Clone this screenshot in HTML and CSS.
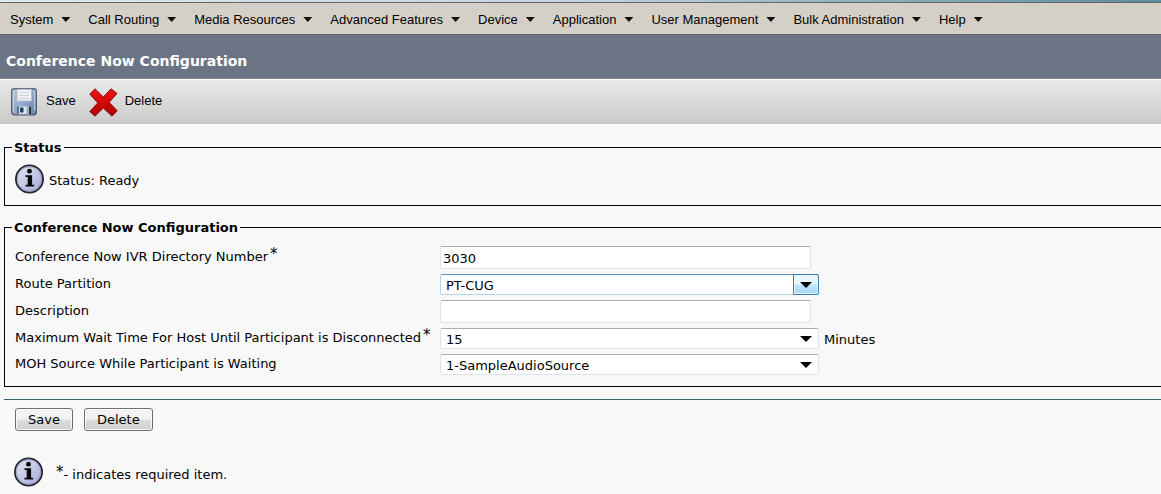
FILE: index.html
```html
<!DOCTYPE html>
<html lang="en">
<head>
<meta charset="utf-8">
<title>Conference Now Configuration</title>
<link rel="stylesheet" href="styles.css">
</head>
<body>
<svg width="0" height="0" class="defs" aria-hidden="true">
  <defs>
    <linearGradient id="ball" x1="0" y1="0" x2="1" y2="1"><stop offset="0" stop-color="#e4e9f3"/><stop offset=".5" stop-color="#c3c9e4"/><stop offset="1" stop-color="#a3a5d4"/></linearGradient>
    <linearGradient id="red" x1="0" y1="0" x2="0" y2="1"><stop offset="0" stop-color="#ee1515"/><stop offset=".45" stop-color="#d60808"/><stop offset="1" stop-color="#a80000"/></linearGradient>
    <linearGradient id="disk" x1="0" y1="0" x2="1" y2="1"><stop offset="0" stop-color="#b9cade"/><stop offset=".5" stop-color="#94a9cc"/><stop offset="1" stop-color="#647aa8"/></linearGradient>
    <symbol id="info" viewBox="0 0 30 30">
      <circle cx="14.5" cy="15" r="13.6" fill="url(#ball)" stroke="#252733" stroke-width="1.8"/>
      <circle cx="14.5" cy="15" r="12.2" fill="none" stroke="#7d86ad" stroke-width="1" opacity=".6"/>
      <circle cx="14.5" cy="7.2" r="2.4" fill="#080808"/>
      <path d="M10.5 11.2h6.6v9.6h2v1.7h-8.6v-1.7h2.2v-7.8h-2.2z" fill="#080808"/>
    </symbol>
  </defs>
</svg>

<div class="strip"></div>
<nav class="menubar">
  <button class="menu" type="button">System</button>
  <button class="menu" type="button">Call Routing</button>
  <button class="menu" type="button">Media Resources</button>
  <button class="menu" type="button">Advanced Features</button>
  <button class="menu" type="button">Device</button>
  <button class="menu" type="button">Application</button>
  <button class="menu" type="button">User Management</button>
  <button class="menu" type="button">Bulk Administration</button>
  <button class="menu" type="button">Help</button>
</nav>
<header class="titlebar"><h1>Conference Now Configuration</h1></header>
<div class="toolbar">
  <button class="tool" type="button">
    <svg width="26" height="28" viewBox="0 0 26 28" aria-hidden="true">
      <path d="M2.5.8h21q1.8 0 1.8 1.8v21.6q0 2.6-2.6 2.6H3.8Q.7 26.800.7 23.700V2.600Q.7.800 2.500.800z" fill="url(#disk)" stroke="#4a5260" stroke-width="1.2"/>
      <path d="M2.3 2v21M23.8 2v21" stroke="#c9d7ea" stroke-width="1"/>
      <path d="M6 1.500h14.500v11.500H6z" fill="#f0f1f3" stroke="#b4bfce"/>
      <path d="M8 4.500h10.500M8 7.500h10.500M8 10.500h10.500" stroke="#d2d3d6"/>
      <path d="M6 18.500h14v7.800H6z" fill="#dfe6ec"/>
      <path d="M6 18.500h2v7.800H6z" fill="#5a7093"/>
      <path d="M9 19.500h3.500v5H9z" fill="#16476b"/>
      <path d="M15.500 18.500h2.500v7.800h-2.500z" fill="#a5b3b8"/>
      <path d="M18 18.500h2v7.800h-2z" fill="#26374b"/>
    </svg>
    <span>Save</span>
  </button>
  <button class="tool" type="button">
    <svg width="29" height="29" viewBox="0 0 29 29" aria-hidden="true">
      <path d="M6 .8 14.3 9 22 .8 28 5.500 20.200 14.300 28.200 22.800 23 28.200 14.300 20 6 28.200.8 23.500 8.800 14.800.8 6.200z" fill="url(#red)" stroke="#8d1010" stroke-width="1"/>
    </svg>
    <span>Delete</span>
  </button>
</div>

<main class="content">
  <fieldset class="panel">
    <legend>Status</legend>
    <div class="status">
      <svg width="30" height="30" aria-hidden="true"><use href="#info"/></svg>
      <span>Status: Ready</span>
    </div>
  </fieldset>

  <form class="form">
    <fieldset class="panel">
      <legend>Conference Now Configuration</legend>
      <div class="fields">
        <label for="number">Conference Now IVR Directory Number<span class="star">*</span></label>
        <input class="text" id="number" type="text" value="3030">

        <label for="partition">Route Partition</label>
        <div class="pick active"><select id="partition"><option>PT-CUG</option></select></div>

        <label for="description">Description</label>
        <input class="text" id="description" type="text">

        <label for="wait">Maximum Wait Time For Host Until Participant is Disconnected<span class="star">*</span></label>
        <div class="with-unit"><div class="pick"><select id="wait"><option>15</option></select></div><span>Minutes</span></div>

        <label for="moh">MOH Source While Participant is Waiting</label>
        <div class="pick"><select id="moh"><option>1-SampleAudioSource</option></select></div>
      </div>
    </fieldset>
    <hr class="rule">
    <div class="actions">
      <button class="push" type="button">Save</button>
      <button class="push" type="button">Delete</button>
    </div>
  </form>
  <div class="note">
    <svg width="30" height="30" aria-hidden="true"><use href="#info"/></svg>
    <p><span class="star">*</span>- indicates required item.</p>
  </div>
</main>
</body>
</html>
```

FILE: styles.css
```css
*, *::before, *::after { box-sizing: border-box; }

body {
  margin: 0;
  background: #f8f8f8;
  color: #000;
  font: 13px/16px Verdana, "DejaVu Sans", sans-serif;
}

.defs { position: absolute; }

.strip {
  height: 2px;
  background: linear-gradient(90deg, #dde9f0, #c2d5de 50%, #5b8b9e);
}

.menubar {
  display: flex;
  gap: 18px;
  height: 33px;
  padding: 2px 10px 0;
  background: #d5d0c7;
  border-top: 1px solid #666;
  border-bottom: 1px solid #666;
}

.menu, .tool {
  display: flex;
  align-items: center;
  padding: 0;
  border: 0;
  background: none;
  color: #000;
  font: 13px/16px "Liberation Sans", Arial, sans-serif;
  white-space: nowrap;
}

.menu { gap: 8px; }

.menu::after {
  content: "";
  width: 9px;
  height: 5px;
  background: #111;
  clip-path: polygon(0 0, 100% 0, 50% 100%);
}

.titlebar {
  padding: 17px 6px;
  height: 44px;
  background: #6b7485;
  border-bottom: 1px solid #85888d;
}

.titlebar h1 {
  margin: 0;
  color: #fff;
  font-size: 14px;
  line-height: 18px;
}

.toolbar {
  display: flex;
  gap: 13px;
  height: 45px;
  padding: 0 11px;
  border-top: 1px solid #fff;
  background: linear-gradient(#e8e8e8, #cacac9);
}

.tool { gap: 9px; }
.tool + .tool { gap: 7px; }
.tool span { padding-bottom: 2px; }

.content { padding: 14px 0 0 4px; }

.panel {
  min-width: 0;
  margin: 0;
  padding: 0 0 11px 10px;
  border: 1px solid #000;
  border-right: 0;
}

.panel legend {
  margin-left: -3px;
  padding: 2px 2px 0;
  font-weight: bold;
}

.status {
  display: flex;
  align-items: center;
  gap: 4px;
  padding-top: 8px;
}

.status span { padding-top: 3px; }

.form { margin-top: 12px; }

.fields {
  display: grid;
  grid-template-columns: 425px 1fr;
  row-gap: 5px;
  align-items: center;
  padding-top: 10px;
}

.fields label {
  padding-bottom: 2px;
  white-space: nowrap;
}

.star {
  padding-left: 2px;
  font-size: 15px;
  line-height: 10px;
  vertical-align: 2px;
}

.text {
  width: 371px;
  height: 23px;
  padding: 2px 2px 0;
  border: 1px solid #e2e3ea;
  border-top-color: #abadb3;
  border-radius: 2px;
  background: #fff;
  font: inherit;
}

.pick {
  position: relative;
  width: 379px;
}

.pick select {
  display: block;
  width: 100%;
  height: 21px;
  padding: 2px 28px 0 5px;
  border: 1px solid #e2e3ea;
  border-top-color: #abadb3;
  border-radius: 2px;
  appearance: none;
  background: #fff;
  color: #000;
  font: inherit;
}

.pick::after {
  content: "";
  position: absolute;
  top: 8px;
  right: 7px;
  width: 12px;
  height: 6px;
  background: #000;
  clip-path: polygon(0 0, 100% 0, 50% 100%);
  pointer-events: none;
}

.pick.active select {
  border-color: #5794bf #b7d5ea #b7d5ea;
}

.pick.active::before {
  content: "";
  position: absolute;
  top: 0;
  right: 0;
  width: 26px;
  height: 21px;
  border: 1px solid #3c7fb1;
  border-radius: 0 2px 2px 0;
  background: linear-gradient(#eaf6fd 0 48%, #bee6fd 52%, #a7d9f5);
  box-shadow: inset 0 0 0 1px #e4f4fc;
  pointer-events: none;
}

.with-unit {
  display: flex;
  align-items: center;
  gap: 5px;
}

.with-unit span { padding-top: 2px; }

.rule {
  margin: 12px 0 0;
  border: 0;
  border-top: 1px solid #336666;
}

.actions {
  display: flex;
  gap: 11px;
  padding: 8px 11px 0;
}

.push {
  height: 23px;
  padding: 1px 12px 0;
  border: 1px solid #707070;
  border-radius: 3px;
  background: linear-gradient(#f2f2f2 0 48%, #dddddd 52%, #cfcfcf);
  box-shadow: inset 0 0 0 1px #fafafa;
  color: #000;
  font: inherit;
}

.note {
  display: flex;
  align-items: center;
  gap: 10px;
  padding: 26px 10px 0;
}

.note p {
  margin: 0;
  padding-top: 5px;
}
```
